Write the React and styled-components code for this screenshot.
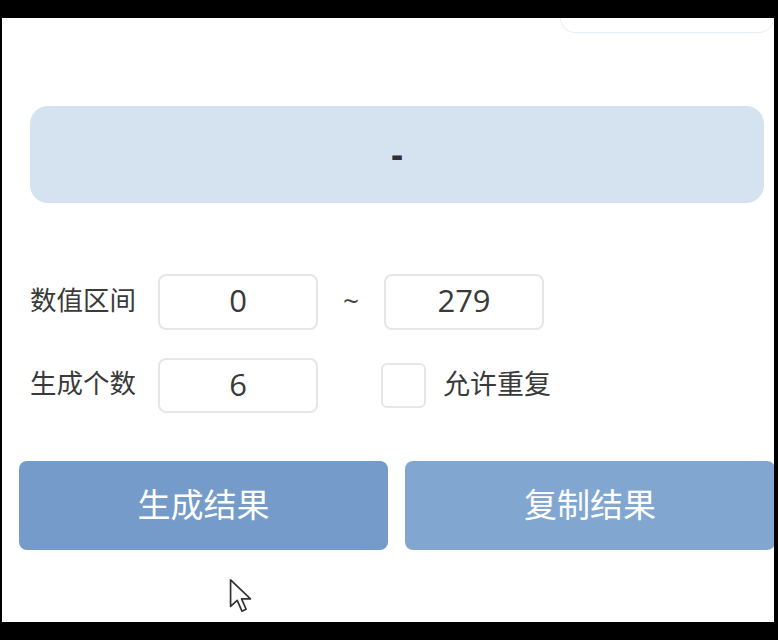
import React, { useState } from "react";
import styled, { createGlobalStyle } from "styled-components";

const GlobalStyle = createGlobalStyle`
  html, body {
    margin: 0;
    padding: 0;
    background: #000;
  }
  * {
    box-sizing: border-box;
  }
`;

const Frame = styled.div`
  width: 778px;
  height: 640px;
  background: #000;
  padding: 18px 4px 18px 2px;
`;

const Screen = styled.div`
  position: relative;
  height: 100%;
  background: #fff;
  display: flex;
  flex-direction: column;
  font-family: "Noto Sans CJK SC", "Noto Sans", sans-serif;
  color: #333;
  overflow: hidden;
`;

const TopStrip = styled.div`
  display: flex;
  justify-content: flex-end;
  height: 15px;
`;

const TopTab = styled.div`
  width: 214px;
  height: 15px;
  border: 1px solid #e6eef5;
  border-top: none;
  border-radius: 0 0 18px 18px;
`;

const ResultPanel = styled.div`
  margin: 73px 10px 0 28px;
  height: 97px;
  border-radius: 18px;
  background: #d5e3f0;
  display: flex;
  align-items: center;
  justify-content: center;
  font-family: "Open Sans", "Noto Sans CJK SC", sans-serif;
  font-size: 36px;
  font-weight: 700;
  line-height: 1;
  padding-bottom: 2px;
  color: #2c2f36;
`;

const Form = styled.div`
  display: flex;
  flex-direction: column;
  gap: 28px;
  margin: 71px 0 0 28px;
`;

const Row = styled.div`
  display: flex;
  align-items: center;
  height: ${(p) => p.$h}px;
`;

const Label = styled.span`
  width: 128px;
  font-size: 26.5px;
  line-height: 1;
  padding-bottom: 6px;
  color: #3a3a3a;
`;

const NumBox = styled.div`
  width: 160px;
  height: 100%;
  border: 2px solid #e6e6e6;
  border-radius: 8px;
  display: flex;
  align-items: center;
  justify-content: center;
  font-family: "Open Sans", "Noto Sans", sans-serif;
  font-size: 31px;
  line-height: 1;
  padding-bottom: 3px;
  color: #3a3a3a;
`;

const Tilde = styled.span`
  width: 66px;
  text-align: center;
  font-family: "Open Sans", sans-serif;
  font-size: 28px;
  line-height: 1;
  padding-bottom: 4px;
  color: #444;
`;

const Check = styled.div`
  width: 45px;
  height: 45px;
  margin-left: 63px;
  border: 2px solid #e6e6e6;
  border-radius: 6px;
  background: ${(p) => (p.$on ? "#739bc8" : "#fff")};
`;

const CheckLabel = styled.span`
  margin-left: 17px;
  font-size: 27px;
  line-height: 1;
  padding-bottom: 6px;
  color: #3a3a3a;
`;

const Buttons = styled.div`
  display: grid;
  grid-template-columns: 369px 370px;
  gap: 17px;
  margin: 48px 0 0 17px;
`;

const Btn = styled.button`
  height: 89px;
  border: none;
  border-radius: 8px;
  background: ${(p) => p.$bg};
  color: #fff;
  font-family: "Noto Sans CJK SC", sans-serif;
  font-size: 33px;
  line-height: 1;
  padding: 0 0 4px;
  cursor: pointer;
`;

const Cursor = styled.svg`
  position: absolute;
  left: 226px;
  top: 560px;
`;

export default function App() {
  const [dup, setDup] = useState(false);
  return (
    <Frame>
      <GlobalStyle />
      <Screen>
        <TopStrip>
          <TopTab />
        </TopStrip>
        <ResultPanel>-</ResultPanel>
        <Form>
          <Row $h={56}>
            <Label>数值区间</Label>
            <NumBox>0</NumBox>
            <Tilde>~</Tilde>
            <NumBox>279</NumBox>
          </Row>
          <Row $h={55}>
            <Label>生成个数</Label>
            <NumBox>6</NumBox>
            <Check $on={dup} onClick={() => setDup(!dup)} />
            <CheckLabel>允许重复</CheckLabel>
          </Row>
        </Form>
        <Buttons>
          <Btn $bg="#749bc9">生成结果</Btn>
          <Btn $bg="#81a7d1">复制结果</Btn>
        </Buttons>
        <Cursor width="26" height="36" viewBox="0 0 13 19">
          <path
            d="M1 1 L1 15 L4.5 11.8 L7 17.5 L9.2 16.5 L6.8 11 L11.5 11 Z"
            fill="#fff"
            stroke="#333"
            strokeWidth="0.9"
            strokeLinejoin="round"
          />
        </Cursor>
      </Screen>
    </Frame>
  );
}
